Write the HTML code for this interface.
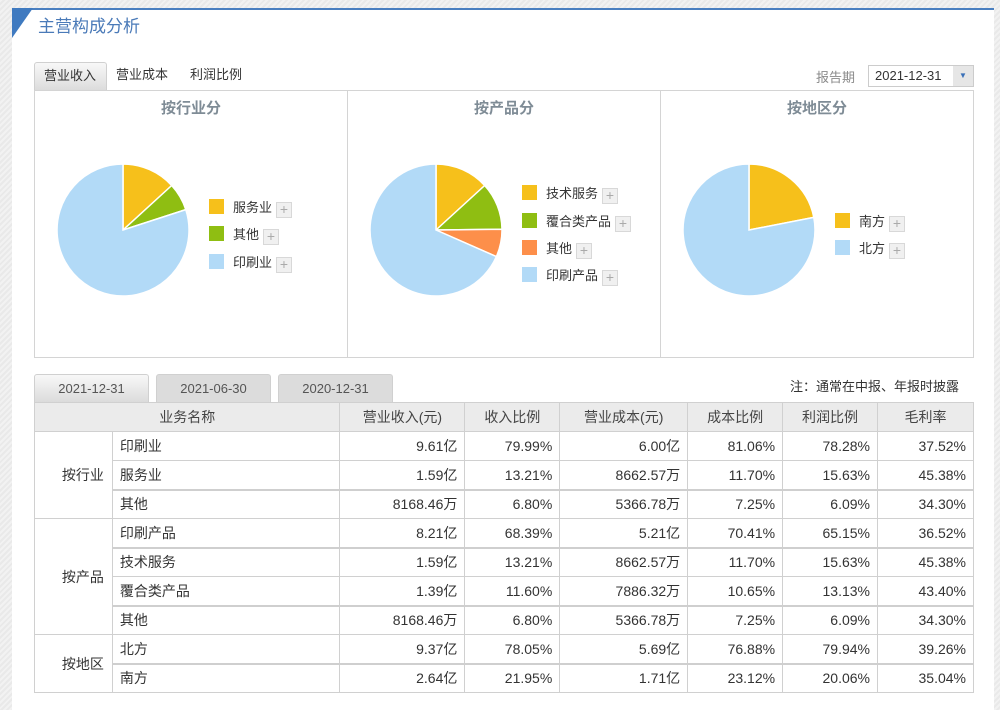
<!DOCTYPE html>
<html><head><meta charset="utf-8">
<style>
*{margin:0;padding:0;box-sizing:border-box}
body{width:1000px;height:710px;overflow:hidden;position:relative;font-family:"Liberation Sans","Noto Sans CJK SC",sans-serif;font-size:13px;color:#333;
background:repeating-linear-gradient(135deg,#f2f2f2 0 2px,#e9e9e9 2px 4px)}
.abs{position:absolute}
#panel{left:12px;top:8px;width:982px;height:702px;background:#fff;border-top:2px solid #4a7fc0}
#title{left:38px;top:12px;font-size:17px;color:#4a7ab8}
.tab{position:absolute;top:62px;height:28px;line-height:26px;font-size:13px;color:#333;padding:0 9px;white-space:nowrap}
.tab.on{width:73px;background:linear-gradient(#f8f8f8,#dcdcdc);border:1px solid #d0d0d0;border-bottom:none;border-radius:3px 3px 0 0}
#charts{left:34px;top:90px;width:940px;height:268px;border:1px solid #d4d4d4}
.vd{position:absolute;top:0;width:1px;height:266px;background:#d4d4d4}
.ct{position:absolute;top:6px;font-size:15px;color:#7f8c96;font-weight:bold;width:312px;text-align:center}
.lg{position:absolute;font-size:13px;color:#333;height:16px;line-height:16px;white-space:nowrap}
.lg i{display:inline-block;width:15px;height:15px;vertical-align:-2px;margin-right:9px}
.lg b{display:inline-block;width:16px;height:16px;border:1px solid #d8d8d8;background:#f0f0f0;color:#aaa;font-weight:normal;text-align:center;line-height:13px;font-size:14px;margin-left:4px;vertical-align:-2px}
.dt{position:absolute;top:374px;height:29px;line-height:28px;text-align:center;font-size:13px;color:#555;border-radius:3px 3px 0 0;background:#dcdcdc;border:1px solid #d0d0d0;border-bottom:none}
.dt.on{background:linear-gradient(#f8f8f8,#dadada)}
table{position:absolute;left:34px;top:402px;width:940px;border-collapse:collapse;font-size:14px}
td,th{border:1px solid #d0d0d0;height:29px;padding:0 7px}
th{background:#ebebeb;font-weight:normal;color:#444;text-align:center}
td.r{text-align:right}
tr.tk td{border-bottom:2px solid #cfcfcf}
tr td.g{text-align:right;padding-right:8px;color:#333;border-bottom:1px solid #d0d0d0}
</style></head><body>
<div id="panel" class="abs"></div>
<svg class="abs" style="left:12px;top:8px" width="22" height="32"><polygon points="0,0 21,0 0,30" fill="#3f7ac0"/></svg>
<div id="title" class="abs">主营构成分析</div>

<div class="tab on" style="left:34px">营业收入</div>
<div class="tab" style="left:107px">营业成本</div>
<div class="tab" style="left:181px">利润比例</div>
<div class="abs" style="left:816px;top:67px;color:#8a8a8a;font-size:13px">报告期</div>
<div class="abs" style="left:868px;top:65px;width:106px;height:22px;border:1px solid #ccc;background:#fff;font-size:13px;line-height:20px;padding-left:6px">2021-12-31<span style="position:absolute;right:0;top:0;width:20px;height:20px;background:#e6e6e6;color:#3a70b8;font-size:8px;text-align:center;line-height:20px">▼</span></div>

<div id="charts" class="abs">
 <div class="vd" style="left:312px"></div><div class="vd" style="left:625px"></div>
 <div class="ct" style="left:0">按行业分</div>
 <div class="ct" style="left:313px">按产品分</div>
 <div class="ct" style="left:626px">按地区分</div>
</div>

<svg class="abs" style="left:0;top:0" width="1000" height="360">
 <g transform="translate(123,230)" stroke="#fff" stroke-width="1.5">
  <path d="M0,0 L0,-66 A66,66 0 0 1 48.7,-44.5Z" fill="#f6c01b"/>
  <path d="M0,0 L48.7,-44.5 A66,66 0 0 1 62.8,-20.4Z" fill="#8fbe12"/>
  <path d="M0,0 L62.8,-20.4 A66,66 0 1 1 0,-66Z" fill="#b2daf7"/>
 </g>
 <g transform="translate(436,230)" stroke="#fff" stroke-width="1.5">
  <path d="M0,0 L0,-66 A66,66 0 0 1 48.7,-44.5Z" fill="#f6c01b"/>
  <path d="M0,0 L48.7,-44.5 A66,66 0 0 1 66,-0.8Z" fill="#8fbe12"/>
  <path d="M0,0 L66,-0.8 A66,66 0 0 1 60.4,26.6Z" fill="#fd8f4a"/>
  <path d="M0,0 L60.4,26.6 A66,66 0 1 1 0,-66Z" fill="#b2daf7"/>
 </g>
 <g transform="translate(749,230)" stroke="#fff" stroke-width="1.5">
  <path d="M0,0 L0,-66 A66,66 0 0 1 64.8,-12.6Z" fill="#f6c01b"/>
  <path d="M0,0 L64.8,-12.6 A66,66 0 1 1 0,-66Z" fill="#b2daf7"/>
 </g>
</svg>

<div class="lg" style="left:209px;top:199px"><i style="background:#f6c01b"></i>服务业<b>+</b></div>
<div class="lg" style="left:209px;top:226px"><i style="background:#8fbe12"></i>其他<b>+</b></div>
<div class="lg" style="left:209px;top:254px"><i style="background:#b2daf7"></i>印刷业<b>+</b></div>

<div class="lg" style="left:522px;top:185px"><i style="background:#f6c01b"></i>技术服务<b>+</b></div>
<div class="lg" style="left:522px;top:213px"><i style="background:#8fbe12"></i>覆合类产品<b>+</b></div>
<div class="lg" style="left:522px;top:240px"><i style="background:#fd8f4a"></i>其他<b>+</b></div>
<div class="lg" style="left:522px;top:267px"><i style="background:#b2daf7"></i>印刷产品<b>+</b></div>

<div class="lg" style="left:835px;top:213px"><i style="background:#f6c01b"></i>南方<b>+</b></div>
<div class="lg" style="left:835px;top:240px"><i style="background:#b2daf7"></i>北方<b>+</b></div>

<div class="dt on" style="left:34px;width:115px">2021-12-31</div>
<div class="dt" style="left:156px;width:115px">2021-06-30</div>
<div class="dt" style="left:278px;width:115px">2020-12-31</div>
<div class="abs" style="left:790px;top:376px;font-size:13px;color:#333">注：通常在中报、年报时披露</div>

<table>
<colgroup><col style="width:78px"><col style="width:228px"><col style="width:125px"><col style="width:95px"><col style="width:128px"><col style="width:95px"><col style="width:95px"><col style="width:96px"></colgroup>
<tr><th colspan="2">业务名称</th><th>营业收入(元)</th><th>收入比例</th><th>营业成本(元)</th><th>成本比例</th><th>利润比例</th><th>毛利率</th></tr>
<tr><td class="g" rowspan="3">按行业</td><td>印刷业</td><td class="r">9.61亿</td><td class="r">79.99%</td><td class="r">6.00亿</td><td class="r">81.06%</td><td class="r">78.28%</td><td class="r">37.52%</td></tr>
<tr class="tk"><td>服务业</td><td class="r">1.59亿</td><td class="r">13.21%</td><td class="r">8662.57万</td><td class="r">11.70%</td><td class="r">15.63%</td><td class="r">45.38%</td></tr>
<tr><td>其他</td><td class="r">8168.46万</td><td class="r">6.80%</td><td class="r">5366.78万</td><td class="r">7.25%</td><td class="r">6.09%</td><td class="r">34.30%</td></tr>
<tr class="tk"><td class="g" rowspan="4">按产品</td><td>印刷产品</td><td class="r">8.21亿</td><td class="r">68.39%</td><td class="r">5.21亿</td><td class="r">70.41%</td><td class="r">65.15%</td><td class="r">36.52%</td></tr>
<tr><td>技术服务</td><td class="r">1.59亿</td><td class="r">13.21%</td><td class="r">8662.57万</td><td class="r">11.70%</td><td class="r">15.63%</td><td class="r">45.38%</td></tr>
<tr class="tk"><td>覆合类产品</td><td class="r">1.39亿</td><td class="r">11.60%</td><td class="r">7886.32万</td><td class="r">10.65%</td><td class="r">13.13%</td><td class="r">43.40%</td></tr>
<tr><td>其他</td><td class="r">8168.46万</td><td class="r">6.80%</td><td class="r">5366.78万</td><td class="r">7.25%</td><td class="r">6.09%</td><td class="r">34.30%</td></tr>
<tr class="tk"><td class="g" rowspan="2">按地区</td><td>北方</td><td class="r">9.37亿</td><td class="r">78.05%</td><td class="r">5.69亿</td><td class="r">76.88%</td><td class="r">79.94%</td><td class="r">39.26%</td></tr>
<tr><td>南方</td><td class="r">2.64亿</td><td class="r">21.95%</td><td class="r">1.71亿</td><td class="r">23.12%</td><td class="r">20.06%</td><td class="r">35.04%</td></tr>
</table>
</body></html>
